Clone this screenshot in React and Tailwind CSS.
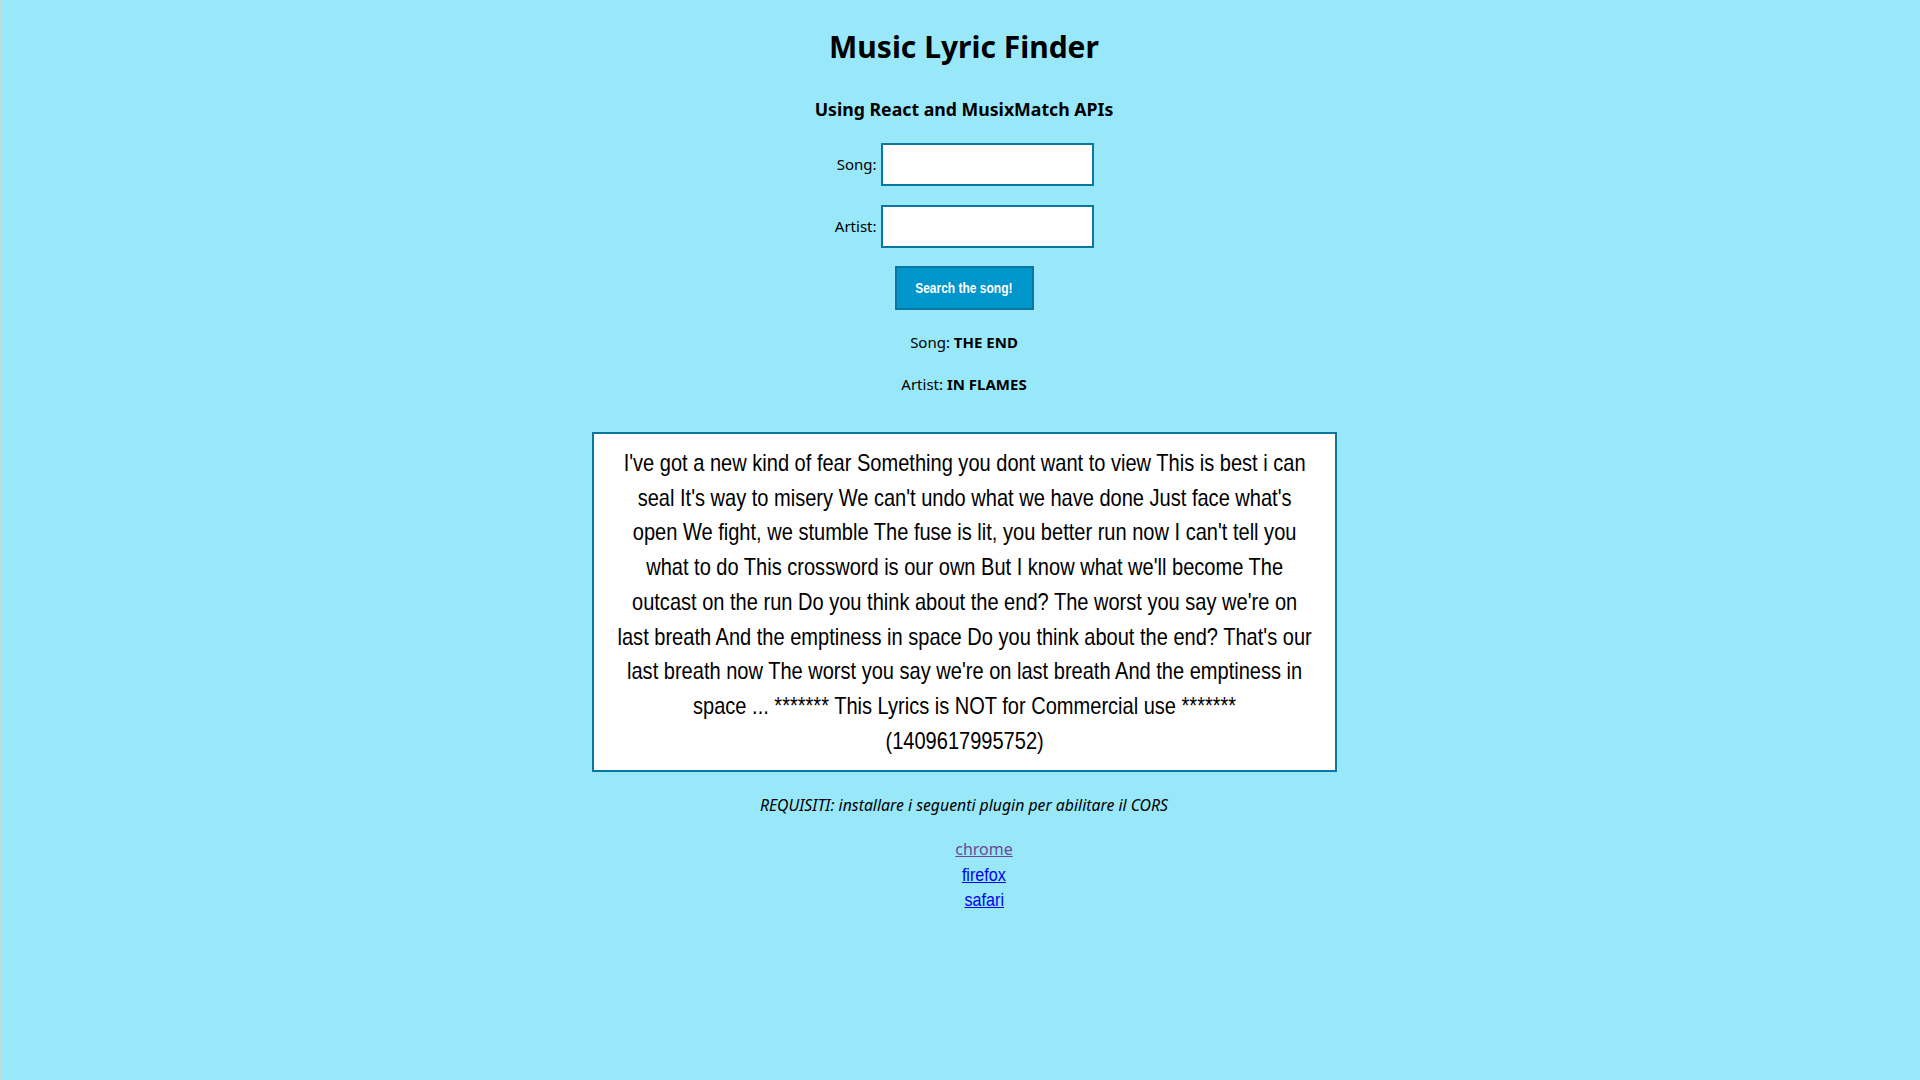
import React, { useState } from 'react';

const lyrics =
  "I've got a new kind of fear Something you dont want to view This is best i can seal It's way to misery We can't undo what we have done Just face what's open We fight, we stumble The fuse is lit, you better run now I can't tell you what to do This crossword is our own But I know what we'll become The outcast on the run Do you think about the end? The worst you say we're on last breath And the emptiness in space Do you think about the end? That's our last breath now The worst you say we're on last breath And the emptiness in space ... ******* This Lyrics is NOT for Commercial use *******\n(1409617995752)";

// Arial Narrow look-alike: Liberation Sans squeezed horizontally
const narrow = "font-['Liberation_Sans',Arial,sans-serif]";

const App = () => {
  const [song, setSong] = useState('');
  const [artist, setArtist] = useState('');

  return (
    <div className="min-h-screen bg-[#98e8fa] border-l border-[#c9d6da] pl-[7px] text-center text-black font-['Noto_Sans',sans-serif]">
      <h1 className="pt-[27px] text-[30px] font-bold leading-[40px]">Music Lyric Finder</h1>
      <h3 className="mt-[29px] text-[17.7px] font-bold leading-[26px]">Using React and MusixMatch APIs</h3>

      {/* Search form */}
      <form className="mt-[21px] flex flex-col items-center" onSubmit={(e) => e.preventDefault()}>
        <label className="flex items-center gap-[4px] text-[15px]">
          <span className="w-[42px] text-right">Song:</span>
          <input
            type="text"
            value={song}
            onChange={(e) => setSong(e.target.value)}
            className="w-[213px] h-[43px] bg-white border-2 border-[#0a77a0] outline-none px-2"
          />
        </label>
        <label className="mt-[19px] flex items-center gap-[4px] text-[15px]">
          <span className="w-[42px] text-right">Artist:</span>
          <input
            type="text"
            value={artist}
            onChange={(e) => setArtist(e.target.value)}
            className="w-[213px] h-[43px] bg-white border-2 border-[#0a77a0] outline-none px-2"
          />
        </label>
        <button
          type="submit"
          className="mt-[18px] w-[139px] h-[44px] bg-[#0096cc] border-2 border-[#0a77a0] text-white flex items-center justify-center"
        >
          <span className={`inline-block scale-x-[0.8] text-[15px] font-bold whitespace-nowrap ${narrow}`}>
            Search the song!
          </span>
        </button>
      </form>

      {/* Result */}
      <p className="mt-[20px] text-[15px] leading-[24px]">
        Song: <b>THE END</b>
      </p>
      <p className="mt-[18px] text-[15px] leading-[24px]">
        Artist: <b>IN FLAMES</b>
      </p>

      <div className="mt-[36px] mx-auto w-[745px] bg-white border-2 border-[#0a77a0] px-[22px] pt-[12px] pb-[12px]">
        <p className={`w-[835px] origin-left scale-x-[0.835] text-[24px] leading-[34.7px] whitespace-pre-line ${narrow}`}>
          {lyrics}
        </p>
      </div>

      <p className="mt-[21px] text-[15.8px] italic leading-[24px]">
        REQUISITI: installare i seguenti plugin per abilitare il CORS
      </p>
      <ul className="mt-[20px] pl-[40px] text-[16px] leading-[25px]">
        <li className="h-[25px]">
          <a href="#chrome" className="text-[#6b4a96] underline">chrome</a>
        </li>
        <li className="h-[25px]">
          <a href="#firefox" className={`inline-block scale-x-[0.85] text-[#0000ee] underline text-[19px] leading-[25px] ${narrow}`}>
            firefox
          </a>
        </li>
        <li className="h-[25px]">
          <a href="#safari" className={`inline-block scale-x-[0.85] text-[#0000ee] underline text-[19px] leading-[25px] ${narrow}`}>
            safari
          </a>
        </li>
      </ul>
    </div>
  );
};

export default App;
